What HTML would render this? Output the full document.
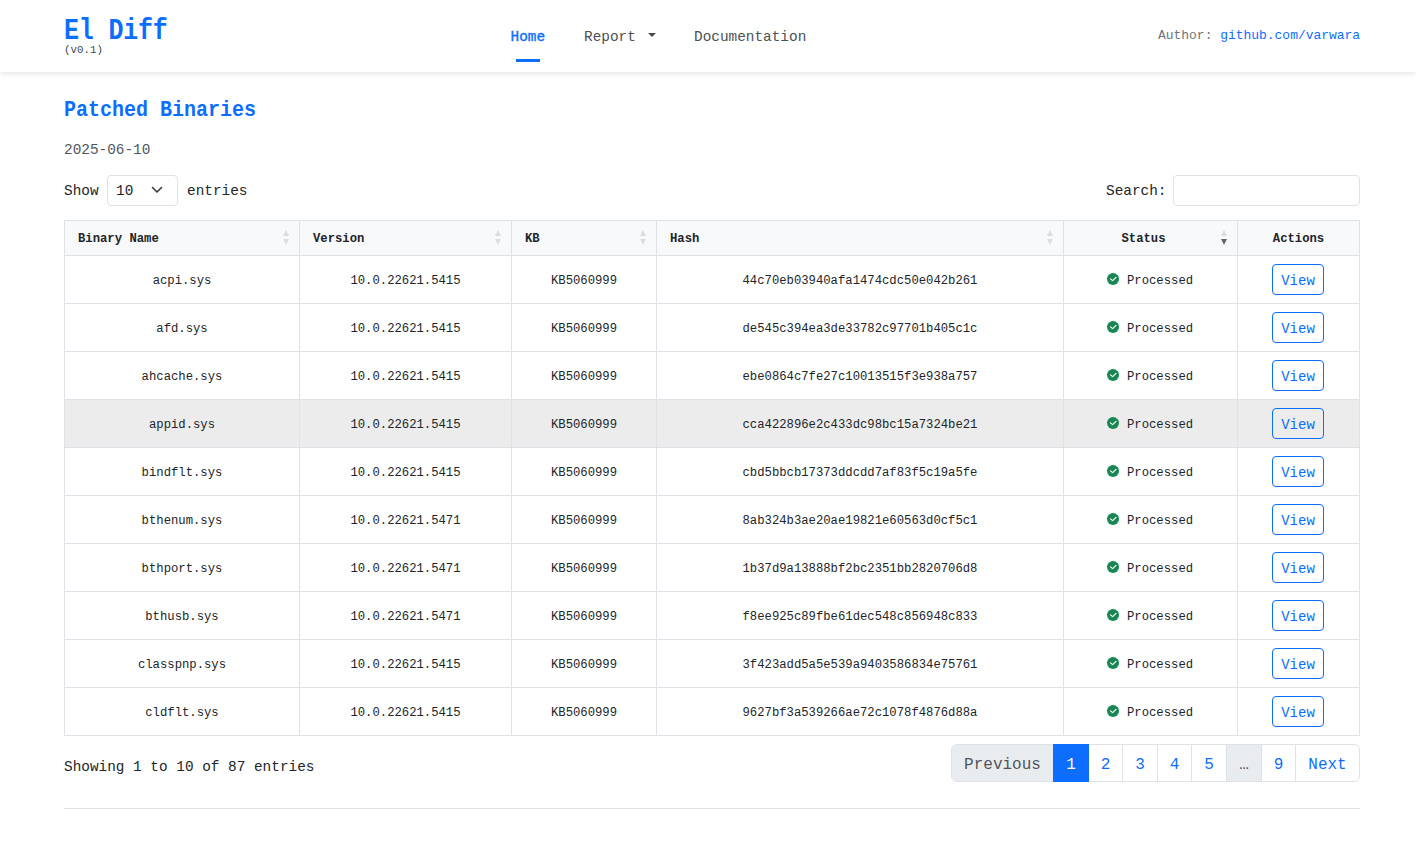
<!DOCTYPE html><html><head><meta charset="utf-8"><title>El Diff</title><style>
html,body{margin:0;padding:0;background:#fff;}
body{width:1416px;height:847px;overflow:hidden;position:relative;font-family:"Liberation Mono",monospace;color:#212529;}
.t{position:absolute;white-space:pre;}
.b{position:absolute;box-sizing:border-box;}
.hdr{position:absolute;left:0;top:0;width:1416px;height:73px;background:#fff;box-shadow:0 2px 4px rgba(0,0,0,.075);border-bottom:1px solid #eceef0;box-sizing:border-box;z-index:2}
.bl{color:#0d6efd}
.sortu{position:absolute;width:0;height:0;border-left:3.5px solid transparent;border-right:3.5px solid transparent;border-bottom:6px solid #d9dde2;}
.sortd{position:absolute;width:0;height:0;border-left:3.5px solid transparent;border-right:3.5px solid transparent;border-top:6px solid #d9dde2;}
</style></head><body>
<div class="hdr">
<div class="t" style="left:64px;top:17.95px;font-size:25px;line-height:30px;font-weight:bold;color:#0d6efd;letter-spacing:-0.2px;transform:scaleY(1.17);transform-origin:0 21.65px;">El Diff</div>
<div class="t" style="left:64px;top:43.63px;font-size:10.8px;line-height:13px;color:#42474d;">(v0.1)</div>
<div class="t" style="left:510.6px;top:28.67px;font-size:14.4px;line-height:17px;font-weight:normal;-webkit-text-stroke:0.35px #0d6efd;color:#0d6efd;">Home</div>
<div class="b" style="left:516px;top:59px;width:24px;height:3px;background:#0d6efd;"></div>
<div class="t" style="left:584px;top:28.67px;font-size:14.4px;line-height:17px;color:#4d5154;">Report</div>
<div style="position:absolute;left:648px;top:33px;width:0;height:0;border-left:4px solid transparent;border-right:4px solid transparent;border-top:4.5px solid #4a4a55;"></div>
<div class="t" style="left:694px;top:28.67px;font-size:14.4px;line-height:17px;color:#4d5154;">Documentation</div>
<div class="t" style="left:1158px;top:28.05px;font-size:12.96px;line-height:16px;color:#6c757d;">Author: <span class="bl">github.com/varwara</span></div>
</div>
<div class="t" style="left:64px;top:98.68px;font-size:20px;line-height:24px;font-weight:bold;color:#0d6efd;transform:scaleY(1.08);transform-origin:0 17.32px;">Patched Binaries</div>
<div class="t" style="left:64px;top:141.67px;font-size:14.4px;line-height:17px;color:#50555b;">2025-06-10</div>
<div class="t" style="left:64px;top:182.67px;font-size:14.4px;line-height:17px;">Show</div>
<div class="b" style="left:107px;top:175px;width:71px;height:31px;border:1px solid #dee2e6;border-radius:4px;"></div>
<div class="t" style="left:116px;top:182.67px;font-size:14.4px;line-height:17px;">10</div>
<svg style="position:absolute;left:151px;top:186px" width="12" height="8" viewBox="0 0 12 8"><path d="M1.5 1.5 L6 6 L10.5 1.5" fill="none" stroke="#343a40" stroke-width="1.6" stroke-linecap="round" stroke-linejoin="round"/></svg>
<div class="t" style="left:187px;top:182.67px;font-size:14.4px;line-height:17px;">entries</div>
<div class="t" style="left:1106px;top:182.67px;font-size:14.4px;line-height:17px;">Search:</div>
<div class="b" style="left:1173px;top:175px;width:187px;height:31px;border:1px solid #dee2e6;border-radius:4px;"></div>
<div class="b" style="left:64px;top:220px;width:1296px;height:516px;border:1px solid #dee2e6;"></div>
<div class="b" style="left:65px;top:221px;width:1294px;height:34px;background:#f8f9fa;"></div>
<div class="b" style="left:65px;top:400px;width:1294px;height:47px;background:#ececec;"></div>
<div class="b" style="left:64px;top:255px;width:1296px;height:1px;background:#dee2e6;"></div>
<div class="b" style="left:64px;top:303px;width:1296px;height:1px;background:#dee2e6;"></div>
<div class="b" style="left:64px;top:351px;width:1296px;height:1px;background:#dee2e6;"></div>
<div class="b" style="left:64px;top:399px;width:1296px;height:1px;background:#dee2e6;"></div>
<div class="b" style="left:64px;top:447px;width:1296px;height:1px;background:#dee2e6;"></div>
<div class="b" style="left:64px;top:495px;width:1296px;height:1px;background:#dee2e6;"></div>
<div class="b" style="left:64px;top:543px;width:1296px;height:1px;background:#dee2e6;"></div>
<div class="b" style="left:64px;top:591px;width:1296px;height:1px;background:#dee2e6;"></div>
<div class="b" style="left:64px;top:639px;width:1296px;height:1px;background:#dee2e6;"></div>
<div class="b" style="left:64px;top:687px;width:1296px;height:1px;background:#dee2e6;"></div>
<div class="b" style="left:64px;top:735px;width:1296px;height:1px;background:#dee2e6;"></div>
<div class="b" style="left:299px;top:220px;width:1px;height:516px;background:#dee2e6;"></div>
<div class="b" style="left:511px;top:220px;width:1px;height:516px;background:#dee2e6;"></div>
<div class="b" style="left:656px;top:220px;width:1px;height:516px;background:#dee2e6;"></div>
<div class="b" style="left:1063px;top:220px;width:1px;height:516px;background:#dee2e6;"></div>
<div class="b" style="left:1237px;top:220px;width:1px;height:516px;background:#dee2e6;"></div>
<div class="t" style="left:78px;top:232.24px;font-size:12.24px;line-height:15px;font-weight:bold;color:#212529;">Binary Name</div>
<div class="t" style="left:313px;top:232.24px;font-size:12.24px;line-height:15px;font-weight:bold;color:#212529;">Version</div>
<div class="t" style="left:525px;top:232.24px;font-size:12.24px;line-height:15px;font-weight:bold;color:#212529;">KB</div>
<div class="t" style="left:670px;top:232.24px;font-size:12.24px;line-height:15px;font-weight:bold;color:#212529;">Hash</div>
<div class="t" style="left:1064px;top:232.24px;font-size:12.24px;line-height:15px;width:159px;text-align:center;font-weight:bold;color:#212529;">Status</div>
<div class="t" style="left:1238px;top:232.24px;font-size:12.24px;line-height:15px;width:121px;text-align:center;font-weight:bold;color:#212529;">Actions</div>
<div class="sortu" style="left:283px;top:230px;"></div>
<div class="sortd" style="left:283px;top:239px;border-top-color:#d9dde2;"></div>
<div class="sortu" style="left:495px;top:230px;"></div>
<div class="sortd" style="left:495px;top:239px;border-top-color:#d9dde2;"></div>
<div class="sortu" style="left:640px;top:230px;"></div>
<div class="sortd" style="left:640px;top:239px;border-top-color:#d9dde2;"></div>
<div class="sortu" style="left:1047px;top:230px;"></div>
<div class="sortd" style="left:1047px;top:239px;border-top-color:#d9dde2;"></div>
<div class="sortu" style="left:1221px;top:230px;"></div>
<div class="sortd" style="left:1221px;top:239px;border-top-color:#666;"></div>
<div class="t" style="left:65px;top:274.24px;font-size:12.24px;line-height:15px;width:234px;text-align:center;">acpi.sys</div>
<div class="t" style="left:300px;top:274.24px;font-size:12.24px;line-height:15px;width:211px;text-align:center;">10.0.22621.5415</div>
<div class="t" style="left:512px;top:274.24px;font-size:12.24px;line-height:15px;width:144px;text-align:center;">KB5060999</div>
<div class="t" style="left:657px;top:274.24px;font-size:12.24px;line-height:15px;width:406px;text-align:center;">44c70eb03940afa1474cdc50e042b261</div>
<svg style="position:absolute;left:1107px;top:273px" width="12" height="12" viewBox="0 0 12 12"><circle cx="6" cy="6" r="6" fill="#198754"/><path d="M3.4 5.9 L5.6 7.6 L9 4.4" fill="none" stroke="#fff" stroke-width="1.15" stroke-linecap="round" stroke-linejoin="round"/></svg>
<div class="t" style="left:1127px;top:274.24px;font-size:12.24px;line-height:15px;">Processed</div>
<div class="b" style="left:1272px;top:264px;width:52px;height:31px;border:1px solid #0d6efd;border-radius:4px;"></div>
<div class="t" style="left:1273px;top:272.77px;font-size:14px;line-height:17px;width:50px;text-align:center;color:#0d6efd;">View</div>
<div class="t" style="left:65px;top:322.24px;font-size:12.24px;line-height:15px;width:234px;text-align:center;">afd.sys</div>
<div class="t" style="left:300px;top:322.24px;font-size:12.24px;line-height:15px;width:211px;text-align:center;">10.0.22621.5415</div>
<div class="t" style="left:512px;top:322.24px;font-size:12.24px;line-height:15px;width:144px;text-align:center;">KB5060999</div>
<div class="t" style="left:657px;top:322.24px;font-size:12.24px;line-height:15px;width:406px;text-align:center;">de545c394ea3de33782c97701b405c1c</div>
<svg style="position:absolute;left:1107px;top:321px" width="12" height="12" viewBox="0 0 12 12"><circle cx="6" cy="6" r="6" fill="#198754"/><path d="M3.4 5.9 L5.6 7.6 L9 4.4" fill="none" stroke="#fff" stroke-width="1.15" stroke-linecap="round" stroke-linejoin="round"/></svg>
<div class="t" style="left:1127px;top:322.24px;font-size:12.24px;line-height:15px;">Processed</div>
<div class="b" style="left:1272px;top:312px;width:52px;height:31px;border:1px solid #0d6efd;border-radius:4px;"></div>
<div class="t" style="left:1273px;top:320.77px;font-size:14px;line-height:17px;width:50px;text-align:center;color:#0d6efd;">View</div>
<div class="t" style="left:65px;top:370.24px;font-size:12.24px;line-height:15px;width:234px;text-align:center;">ahcache.sys</div>
<div class="t" style="left:300px;top:370.24px;font-size:12.24px;line-height:15px;width:211px;text-align:center;">10.0.22621.5415</div>
<div class="t" style="left:512px;top:370.24px;font-size:12.24px;line-height:15px;width:144px;text-align:center;">KB5060999</div>
<div class="t" style="left:657px;top:370.24px;font-size:12.24px;line-height:15px;width:406px;text-align:center;">ebe0864c7fe27c10013515f3e938a757</div>
<svg style="position:absolute;left:1107px;top:369px" width="12" height="12" viewBox="0 0 12 12"><circle cx="6" cy="6" r="6" fill="#198754"/><path d="M3.4 5.9 L5.6 7.6 L9 4.4" fill="none" stroke="#fff" stroke-width="1.15" stroke-linecap="round" stroke-linejoin="round"/></svg>
<div class="t" style="left:1127px;top:370.24px;font-size:12.24px;line-height:15px;">Processed</div>
<div class="b" style="left:1272px;top:360px;width:52px;height:31px;border:1px solid #0d6efd;border-radius:4px;"></div>
<div class="t" style="left:1273px;top:368.77px;font-size:14px;line-height:17px;width:50px;text-align:center;color:#0d6efd;">View</div>
<div class="t" style="left:65px;top:418.24px;font-size:12.24px;line-height:15px;width:234px;text-align:center;">appid.sys</div>
<div class="t" style="left:300px;top:418.24px;font-size:12.24px;line-height:15px;width:211px;text-align:center;">10.0.22621.5415</div>
<div class="t" style="left:512px;top:418.24px;font-size:12.24px;line-height:15px;width:144px;text-align:center;">KB5060999</div>
<div class="t" style="left:657px;top:418.24px;font-size:12.24px;line-height:15px;width:406px;text-align:center;">cca422896e2c433dc98bc15a7324be21</div>
<svg style="position:absolute;left:1107px;top:417px" width="12" height="12" viewBox="0 0 12 12"><circle cx="6" cy="6" r="6" fill="#198754"/><path d="M3.4 5.9 L5.6 7.6 L9 4.4" fill="none" stroke="#fff" stroke-width="1.15" stroke-linecap="round" stroke-linejoin="round"/></svg>
<div class="t" style="left:1127px;top:418.24px;font-size:12.24px;line-height:15px;">Processed</div>
<div class="b" style="left:1272px;top:408px;width:52px;height:31px;border:1px solid #0d6efd;border-radius:4px;"></div>
<div class="t" style="left:1273px;top:416.77px;font-size:14px;line-height:17px;width:50px;text-align:center;color:#0d6efd;">View</div>
<div class="t" style="left:65px;top:466.24px;font-size:12.24px;line-height:15px;width:234px;text-align:center;">bindflt.sys</div>
<div class="t" style="left:300px;top:466.24px;font-size:12.24px;line-height:15px;width:211px;text-align:center;">10.0.22621.5415</div>
<div class="t" style="left:512px;top:466.24px;font-size:12.24px;line-height:15px;width:144px;text-align:center;">KB5060999</div>
<div class="t" style="left:657px;top:466.24px;font-size:12.24px;line-height:15px;width:406px;text-align:center;">cbd5bbcb17373ddcdd7af83f5c19a5fe</div>
<svg style="position:absolute;left:1107px;top:465px" width="12" height="12" viewBox="0 0 12 12"><circle cx="6" cy="6" r="6" fill="#198754"/><path d="M3.4 5.9 L5.6 7.6 L9 4.4" fill="none" stroke="#fff" stroke-width="1.15" stroke-linecap="round" stroke-linejoin="round"/></svg>
<div class="t" style="left:1127px;top:466.24px;font-size:12.24px;line-height:15px;">Processed</div>
<div class="b" style="left:1272px;top:456px;width:52px;height:31px;border:1px solid #0d6efd;border-radius:4px;"></div>
<div class="t" style="left:1273px;top:464.77px;font-size:14px;line-height:17px;width:50px;text-align:center;color:#0d6efd;">View</div>
<div class="t" style="left:65px;top:514.24px;font-size:12.24px;line-height:15px;width:234px;text-align:center;">bthenum.sys</div>
<div class="t" style="left:300px;top:514.24px;font-size:12.24px;line-height:15px;width:211px;text-align:center;">10.0.22621.5471</div>
<div class="t" style="left:512px;top:514.24px;font-size:12.24px;line-height:15px;width:144px;text-align:center;">KB5060999</div>
<div class="t" style="left:657px;top:514.24px;font-size:12.24px;line-height:15px;width:406px;text-align:center;">8ab324b3ae20ae19821e60563d0cf5c1</div>
<svg style="position:absolute;left:1107px;top:513px" width="12" height="12" viewBox="0 0 12 12"><circle cx="6" cy="6" r="6" fill="#198754"/><path d="M3.4 5.9 L5.6 7.6 L9 4.4" fill="none" stroke="#fff" stroke-width="1.15" stroke-linecap="round" stroke-linejoin="round"/></svg>
<div class="t" style="left:1127px;top:514.24px;font-size:12.24px;line-height:15px;">Processed</div>
<div class="b" style="left:1272px;top:504px;width:52px;height:31px;border:1px solid #0d6efd;border-radius:4px;"></div>
<div class="t" style="left:1273px;top:512.77px;font-size:14px;line-height:17px;width:50px;text-align:center;color:#0d6efd;">View</div>
<div class="t" style="left:65px;top:562.24px;font-size:12.24px;line-height:15px;width:234px;text-align:center;">bthport.sys</div>
<div class="t" style="left:300px;top:562.24px;font-size:12.24px;line-height:15px;width:211px;text-align:center;">10.0.22621.5471</div>
<div class="t" style="left:512px;top:562.24px;font-size:12.24px;line-height:15px;width:144px;text-align:center;">KB5060999</div>
<div class="t" style="left:657px;top:562.24px;font-size:12.24px;line-height:15px;width:406px;text-align:center;">1b37d9a13888bf2bc2351bb2820706d8</div>
<svg style="position:absolute;left:1107px;top:561px" width="12" height="12" viewBox="0 0 12 12"><circle cx="6" cy="6" r="6" fill="#198754"/><path d="M3.4 5.9 L5.6 7.6 L9 4.4" fill="none" stroke="#fff" stroke-width="1.15" stroke-linecap="round" stroke-linejoin="round"/></svg>
<div class="t" style="left:1127px;top:562.24px;font-size:12.24px;line-height:15px;">Processed</div>
<div class="b" style="left:1272px;top:552px;width:52px;height:31px;border:1px solid #0d6efd;border-radius:4px;"></div>
<div class="t" style="left:1273px;top:560.77px;font-size:14px;line-height:17px;width:50px;text-align:center;color:#0d6efd;">View</div>
<div class="t" style="left:65px;top:610.24px;font-size:12.24px;line-height:15px;width:234px;text-align:center;">bthusb.sys</div>
<div class="t" style="left:300px;top:610.24px;font-size:12.24px;line-height:15px;width:211px;text-align:center;">10.0.22621.5471</div>
<div class="t" style="left:512px;top:610.24px;font-size:12.24px;line-height:15px;width:144px;text-align:center;">KB5060999</div>
<div class="t" style="left:657px;top:610.24px;font-size:12.24px;line-height:15px;width:406px;text-align:center;">f8ee925c89fbe61dec548c856948c833</div>
<svg style="position:absolute;left:1107px;top:609px" width="12" height="12" viewBox="0 0 12 12"><circle cx="6" cy="6" r="6" fill="#198754"/><path d="M3.4 5.9 L5.6 7.6 L9 4.4" fill="none" stroke="#fff" stroke-width="1.15" stroke-linecap="round" stroke-linejoin="round"/></svg>
<div class="t" style="left:1127px;top:610.24px;font-size:12.24px;line-height:15px;">Processed</div>
<div class="b" style="left:1272px;top:600px;width:52px;height:31px;border:1px solid #0d6efd;border-radius:4px;"></div>
<div class="t" style="left:1273px;top:608.77px;font-size:14px;line-height:17px;width:50px;text-align:center;color:#0d6efd;">View</div>
<div class="t" style="left:65px;top:658.24px;font-size:12.24px;line-height:15px;width:234px;text-align:center;">classpnp.sys</div>
<div class="t" style="left:300px;top:658.24px;font-size:12.24px;line-height:15px;width:211px;text-align:center;">10.0.22621.5415</div>
<div class="t" style="left:512px;top:658.24px;font-size:12.24px;line-height:15px;width:144px;text-align:center;">KB5060999</div>
<div class="t" style="left:657px;top:658.24px;font-size:12.24px;line-height:15px;width:406px;text-align:center;">3f423add5a5e539a9403586834e75761</div>
<svg style="position:absolute;left:1107px;top:657px" width="12" height="12" viewBox="0 0 12 12"><circle cx="6" cy="6" r="6" fill="#198754"/><path d="M3.4 5.9 L5.6 7.6 L9 4.4" fill="none" stroke="#fff" stroke-width="1.15" stroke-linecap="round" stroke-linejoin="round"/></svg>
<div class="t" style="left:1127px;top:658.24px;font-size:12.24px;line-height:15px;">Processed</div>
<div class="b" style="left:1272px;top:648px;width:52px;height:31px;border:1px solid #0d6efd;border-radius:4px;"></div>
<div class="t" style="left:1273px;top:656.77px;font-size:14px;line-height:17px;width:50px;text-align:center;color:#0d6efd;">View</div>
<div class="t" style="left:65px;top:706.24px;font-size:12.24px;line-height:15px;width:234px;text-align:center;">cldflt.sys</div>
<div class="t" style="left:300px;top:706.24px;font-size:12.24px;line-height:15px;width:211px;text-align:center;">10.0.22621.5415</div>
<div class="t" style="left:512px;top:706.24px;font-size:12.24px;line-height:15px;width:144px;text-align:center;">KB5060999</div>
<div class="t" style="left:657px;top:706.24px;font-size:12.24px;line-height:15px;width:406px;text-align:center;">9627bf3a539266ae72c1078f4876d88a</div>
<svg style="position:absolute;left:1107px;top:705px" width="12" height="12" viewBox="0 0 12 12"><circle cx="6" cy="6" r="6" fill="#198754"/><path d="M3.4 5.9 L5.6 7.6 L9 4.4" fill="none" stroke="#fff" stroke-width="1.15" stroke-linecap="round" stroke-linejoin="round"/></svg>
<div class="t" style="left:1127px;top:706.24px;font-size:12.24px;line-height:15px;">Processed</div>
<div class="b" style="left:1272px;top:696px;width:52px;height:31px;border:1px solid #0d6efd;border-radius:4px;"></div>
<div class="t" style="left:1273px;top:704.77px;font-size:14px;line-height:17px;width:50px;text-align:center;color:#0d6efd;">View</div>
<div class="t" style="left:64px;top:758.67px;font-size:14.4px;line-height:17px;">Showing 1 to 10 of 87 entries</div>
<div class="b" style="left:951px;top:744px;width:409px;height:38px;border:1px solid #dee2e6;border-radius:6px;background:#fff;"></div>
<div class="b" style="left:952px;top:745px;width:101px;height:36px;background:#e9ecef;border-radius:5px 0 0 5px;"></div>
<div class="b" style="left:1227px;top:745px;width:34px;height:36px;background:#e9ecef;"></div>
<div class="b" style="left:1053px;top:744px;width:36px;height:38px;background:#0d6efd;"></div>
<div class="b" style="left:1122px;top:745px;width:1px;height:36px;background:#dee2e6;"></div>
<div class="b" style="left:1157px;top:745px;width:1px;height:36px;background:#dee2e6;"></div>
<div class="b" style="left:1191px;top:745px;width:1px;height:36px;background:#dee2e6;"></div>
<div class="b" style="left:1226px;top:745px;width:1px;height:36px;background:#dee2e6;"></div>
<div class="b" style="left:1261px;top:745px;width:1px;height:36px;background:#dee2e6;"></div>
<div class="b" style="left:1295px;top:745px;width:1px;height:36px;background:#dee2e6;"></div>
<div class="t" style="left:952px;top:755.94px;font-size:16px;line-height:19px;width:101px;text-align:center;color:#50555b;">Previous</div>
<div class="t" style="left:1053px;top:755.94px;font-size:16px;line-height:19px;width:36px;text-align:center;color:#fff;">1</div>
<div class="t" style="left:1089px;top:755.94px;font-size:16px;line-height:19px;width:33px;text-align:center;color:#0d6efd;">2</div>
<div class="t" style="left:1123px;top:755.94px;font-size:16px;line-height:19px;width:34px;text-align:center;color:#0d6efd;">3</div>
<div class="t" style="left:1158px;top:755.94px;font-size:16px;line-height:19px;width:33px;text-align:center;color:#0d6efd;">4</div>
<div class="t" style="left:1192px;top:755.94px;font-size:16px;line-height:19px;width:34px;text-align:center;color:#0d6efd;">5</div>
<div class="t" style="left:1227px;top:755.94px;font-size:16px;line-height:19px;width:34px;text-align:center;color:#50555b;">…</div>
<div class="t" style="left:1262px;top:755.94px;font-size:16px;line-height:19px;width:33px;text-align:center;color:#0d6efd;">9</div>
<div class="t" style="left:1296px;top:755.94px;font-size:16px;line-height:19px;width:63px;text-align:center;color:#0d6efd;">Next</div>
<div class="b" style="left:64px;top:808px;width:1296px;height:1px;background:#dee2e6;"></div>
</body></html>
